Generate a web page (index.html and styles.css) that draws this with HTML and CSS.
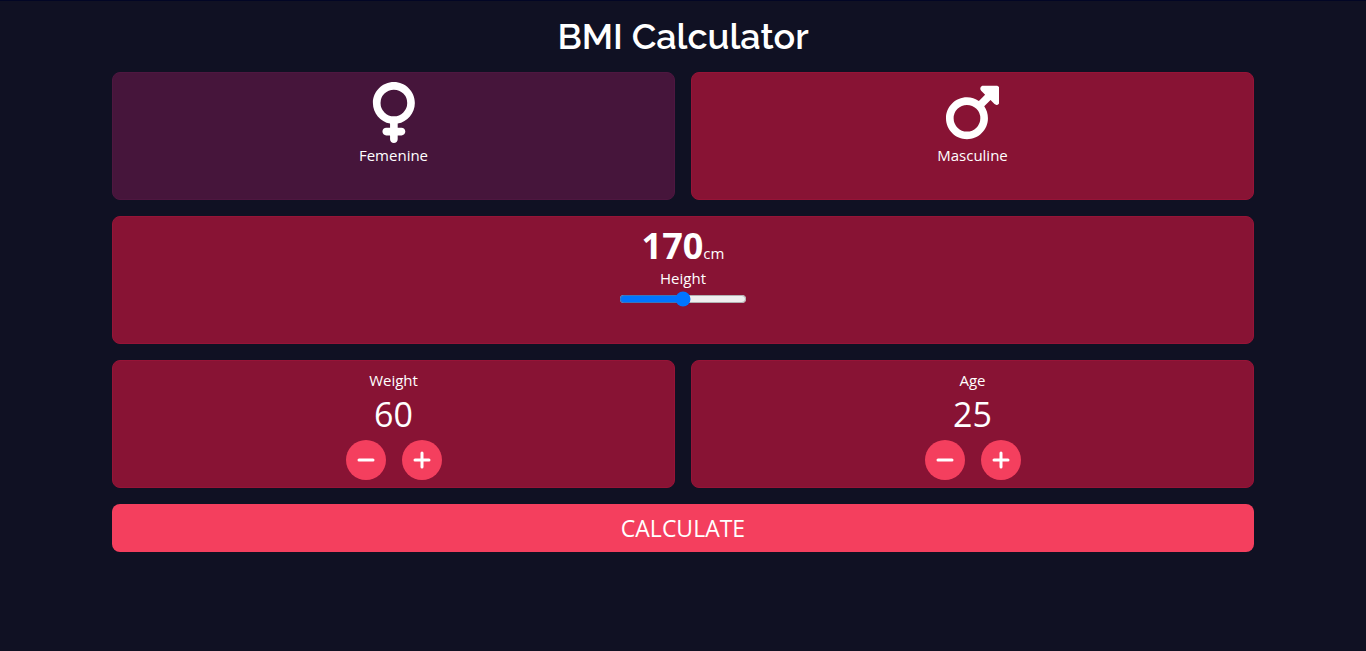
FILE: index.html
```html
<!DOCTYPE html>
<html lang="en">
<head>
<meta charset="utf-8">
<meta name="viewport" content="width=device-width, initial-scale=1">
<title>BMI Calculator</title>
<link rel="stylesheet" href="styles.css">
</head>
<body>
<main class="calculator">
  <h1 class="title">BMI Calculator</h1>
  <div class="row">
    <button type="button" class="card card-selected" aria-pressed="true">
      <svg class="gender-icon" viewBox="0 0 384 512" aria-hidden="true"><path d="M80 176a112 112 0 1 1 224 0A112 112 0 1 1 80 176zM224 349.1c81.9-15 144-86.8 144-173.1C368 78.8 289.2 0 192 0S16 78.8 16 176c0 86.3 62.1 158.1 144 173.1V384H128c-17.7 0-32 14.3-32 32s14.3 32 32 32h32v32c0 17.7 14.3 32 32 32s32-14.3 32-32V448h32c17.7 0 32-14.3 32-32s-14.3-32-32-32H224V349.1z"/></svg>
      <span>Femenine</span>
    </button>
    <button type="button" class="card" aria-pressed="false">
      <svg class="gender-icon" viewBox="0 0 448 512" aria-hidden="true"><path d="M289.8 46.8c3.7-9 12.5-14.8 22.2-14.8H424c13.3 0 24 10.7 24 24V168c0 9.7-5.8 18.5-14.8 22.2s-19.3 1.7-26.2-5.2l-33.4-33.4L321 204.2c19.5 28.4 31 62.7 31 99.8c0 97.2-78.8 176-176 176S0 401.2 0 304s78.8-176 176-176c37 0 71.4 11.4 99.8 31l52.6-52.6L295 73c-6.9-6.9-8.9-17.2-5.2-26.2zM176 416a112 112 0 1 0 0-224 112 112 0 1 0 0 224z"/></svg>
      <span>Masculine</span>
    </button>
  </div>
  <section class="card">
    <div class="height-line"><output class="height-value" for="height">170</output><span>cm</span></div>
    <label for="height">Height</label>
    <input class="slider" id="height" type="range" min="120" max="220" value="170">
  </section>
  <div class="row">
    <section class="card">
      <span>Weight</span>
      <output class="count" aria-label="Weight">60</output>
      <div class="steps">
        <button type="button" class="step" aria-label="Decrease weight"><svg class="step-icon" viewBox="0 0 18 18" aria-hidden="true"><path d="M2 9h14"/></svg></button>
        <button type="button" class="step" aria-label="Increase weight"><svg class="step-icon" viewBox="0 0 18 18" aria-hidden="true"><path d="M2 9h14M9 2v14"/></svg></button>
      </div>
    </section>
    <section class="card">
      <span>Age</span>
      <output class="count" aria-label="Age">25</output>
      <div class="steps">
        <button type="button" class="step" aria-label="Decrease age"><svg class="step-icon" viewBox="0 0 18 18" aria-hidden="true"><path d="M2 9h14"/></svg></button>
        <button type="button" class="step" aria-label="Increase age"><svg class="step-icon" viewBox="0 0 18 18" aria-hidden="true"><path d="M2 9h14M9 2v14"/></svg></button>
      </div>
    </section>
  </div>
  <button type="button" class="calculate">CALCULATE</button>
</main>
</body>
</html>
```
FILE: styles.css
```css
* { box-sizing: border-box; }

body {
  margin: 0;
  min-height: 100vh;
  background: #101123;
  border-top: 1px solid #020625;
  color: #fff;
  font: 15px/24px "Segoe UI", "Open Sans", "Noto Sans", sans-serif;
}

button {
  color: inherit;
  font: inherit;
  border: 0;
  cursor: pointer;
}

.calculator {
  display: flex;
  flex-direction: column;
  gap: 16px;
  padding: 15px 112px;
}

.title {
  margin: 0;
  font: 600 36px/40px Raleway, Lato, sans-serif;
  text-align: center;
}

.row {
  display: grid;
  grid-template-columns: 1fr 1fr;
  gap: 16px;
}

.card {
  display: flex;
  flex-direction: column;
  align-items: center;
  min-height: 128px;
  padding: 7px;
  background: #881334;
  border: 1px solid #961437;
  border-radius: 8px;
}

.card-selected {
  background: #46153b;
  border-color: #4e1740;
}

.gender-icon {
  height: 63px;
  padding-top: 2px;
  fill: currentColor;
}

.height-line {
  padding-top: 2px;
}

.height-value {
  font-size: 36px;
  font-weight: 700;
  line-height: 40px;
}

.slider {
  width: 128px;
  height: 16px;
  margin: 1px 2px;
  accent-color: #0075ff;
}

.count {
  font-size: 34px;
  line-height: 44px;
}

.steps {
  display: flex;
  gap: 16px;
  padding-top: 4px;
}

.step {
  display: grid;
  place-items: center;
  width: 40px;
  height: 40px;
  padding: 0;
  background: #f43f5e;
  border-radius: 50%;
}

.step-icon {
  width: 18px;
  height: 18px;
  fill: none;
  stroke: currentColor;
  stroke-width: 3;
  stroke-linecap: round;
}

.calculate {
  padding: 8px;
  background: #f43f5e;
  border-radius: 8px;
  font-size: 23px;
  line-height: 32px;
}
```
